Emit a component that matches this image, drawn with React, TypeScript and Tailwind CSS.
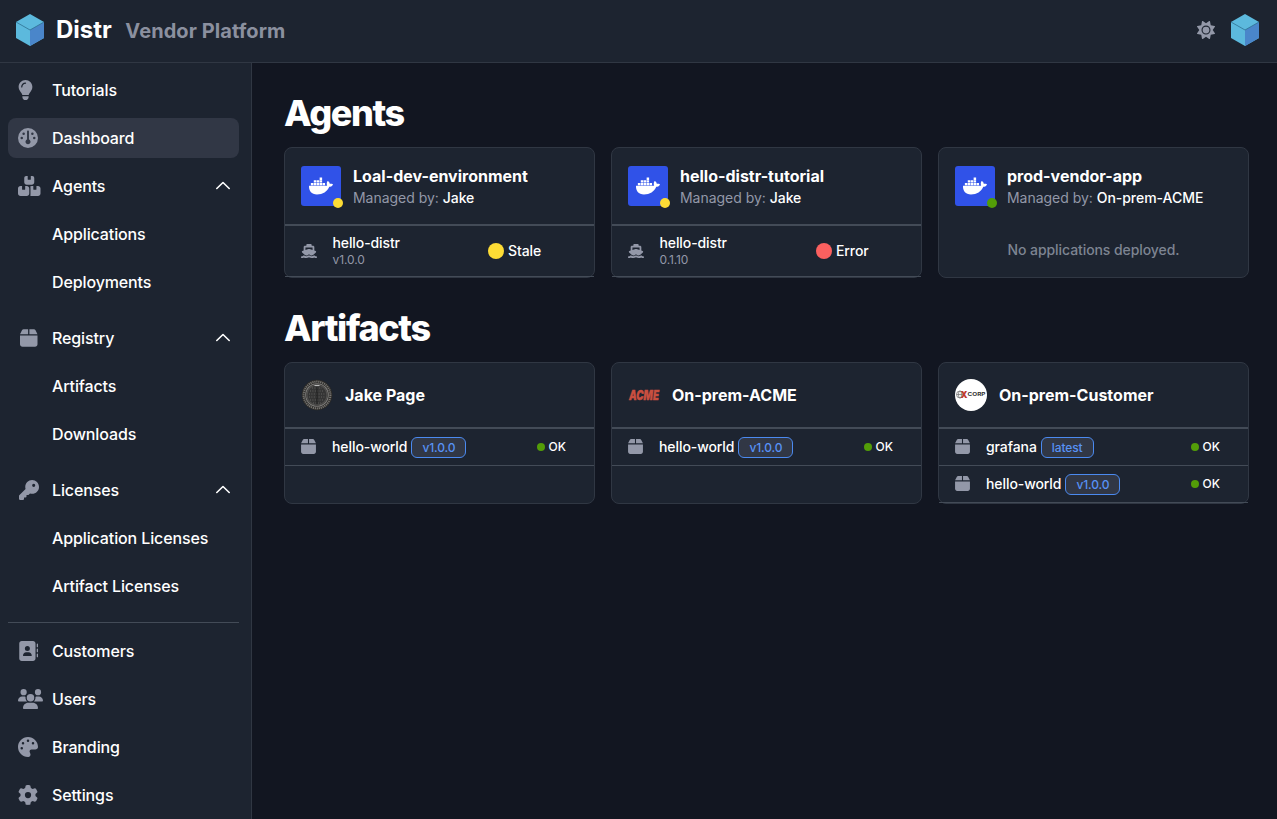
import type { ReactNode } from 'react';
import type { IconType } from 'react-icons';
import {
  FaAddressBook, FaBox, FaBoxesStacked, FaDocker, FaGauge, FaGear, FaKey,
  FaLightbulb, FaPalette, FaShip, FaSun, FaUsers,
} from 'react-icons/fa6';

function Cube() {
  return (
    <svg className="h-8 w-8 shrink-0" viewBox="0 0 32 32">
      <path d="M16 0 30 8v16l-14 8L2 24V8z" fill="#5cb9dd" />
      <path d="M16 16 30 8v16l-14 8z" fill="#4a86ca" />
      <path d="m2 8 14 8 14-8" fill="none" stroke="#2f7091" strokeWidth=".8" />
    </svg>
  );
}

function NavItem({ icon: Icon, label, active, open, iconClass = 'w-5' }: {
  icon?: IconType; label: string; active?: boolean; open?: boolean; iconClass?: string;
}) {
  return (
    <a className={`flex h-10 items-center rounded-lg pl-2.5 pr-2 ${active ? 'bg-[#313745]' : ''}`}>
      <span className="flex w-[34px] shrink-0 items-center text-[#9398a8]">
        {Icon && <Icon className={`h-5 shrink-0 ${iconClass}`} />}
      </span>
      <span className="flex-1 whitespace-nowrap">{label}</span>
      {open && (
        <svg className="h-4 w-4" viewBox="0 0 16 16" fill="none" stroke="white" strokeWidth="1.6" strokeLinecap="round" strokeLinejoin="round">
          <path d="m1.8 10.5 6.2-6 6.2 6" />
        </svg>
      )}
    </a>
  );
}

function Card({ children, className }: { children: ReactNode; className: string }) {
  return <section className={`rounded-lg border border-[#303743] bg-[#1d2430] ${className}`}>{children}</section>;
}

function AgentCard({ name, manager, dot, children }: { name: string; manager: string; dot: string; children: ReactNode }) {
  return (
    <Card className="h-[131px]">
      <div className="flex h-[76px] items-center gap-3 px-4">
        <div className="relative flex h-10 w-10 items-center justify-center rounded-[3px] bg-[#3052e8]">
          <FaDocker className="h-6 w-6 text-white" />
          <span className={`absolute -bottom-0.5 -right-0.5 h-2.5 w-2.5 rounded-full ${dot}`} />
        </div>
        <div>
          <h3 className="text-base leading-6 font-bold">{name}</h3>
          <p className="text-sm leading-5 tracking-[-0.03px] text-[#9398a8]">Managed by: <span className="font-medium text-white">{manager}</span></p>
        </div>
      </div>
      {children}
    </Card>
  );
}

function Deployment({ version, status, color, shift }: { version: string; status: string; color: string; shift: string }) {
  return (
    <div className="flex h-[53px] items-center border-t-2 border-b border-[#434b57] pl-4 text-sm font-medium tracking-[-0.1px]">
      <FaShip className="h-4 w-4 text-[#9398a8]" />
      <div className={`pl-[15.5px] ${shift}`}>
        <div className="-mt-0.5 leading-[18px]">hello-distr</div>
        <div className="text-xs leading-[15px] font-normal text-[#9398a8]">{version}</div>
      </div>
      <span className={`mr-1 h-4 w-4 rounded-full ${color}`} />
      {status}
    </div>
  );
}

function Artifact({ name, tag }: { name: string; tag: string }) {
  return (
    <div className="flex h-[37px] items-center border-b border-[#434b57] pr-7 pl-4 text-sm font-medium">
      <FaBox className="mb-0.5 h-[17px] w-[15px] text-[#9398a8]" />
      <span className="ml-4 tracking-[-0.08px]">{name}</span>
      <span className="ml-1 flex h-[21px] items-center rounded-md border border-[#4b8af0] bg-[#313745] px-2.5 pt-px text-xs tracking-[-0.12px] text-[#5792f5]">{tag}</span>
      <span className="mr-1 ml-auto h-2 w-2 rounded-full bg-[#539d08]" />
      <span className="text-xs">OK</span>
    </div>
  );
}

function ArtifactCard({ name, logo, children }: { name: string; logo: ReactNode; children: ReactNode }) {
  return (
    <Card className="h-[142px]">
      <div className="flex h-[66px] items-center gap-3 border-b-2 border-[#434b57] px-4">
        {logo}
        <h3 className="text-base font-bold">{name}</h3>
      </div>
      {children}
    </Card>
  );
}

function SealLogo() {
  return (
    <svg className="h-8 w-8" viewBox="0 0 32 32" fill="none">
      <circle cx="16" cy="16" r="15.3" fill="#2c2b29" />
      <circle cx="16" cy="16" r="13.4" stroke="#777572" strokeWidth="2" strokeDasharray="1.2 .8" />
      <circle cx="16" cy="16" r="11.3" stroke="#797876" strokeWidth="1.1" />
      <circle cx="16" cy="16" r="10" fill="#353535" stroke="#51504f" strokeWidth="1.2" />
      <path d="M9 12h14M8 15h16M8 18h16M9 21h14M12 24h8M11 9h10" stroke="#636261" strokeDasharray="1 1.4" />
      <path d="M16 8v17" stroke="#1c1c1c" />
      <path d="M13.5 6.5h5" stroke="#bbb" strokeWidth="1.2" />
    </svg>
  );
}

function AcmeLogo() {
  return (
    <svg className="h-8 w-8 overflow-visible" viewBox="0 0 32 32">
      <text x="1" y="20.5" textLength="30" lengthAdjust="spacingAndGlyphs" fill="#c94f40" stroke="#c94f40" strokeWidth=".4" className="text-[13px] font-black italic">ACME</text>
    </svg>
  );
}

function XcorpLogo() {
  return (
    <svg className="h-8 w-8" viewBox="0 0 32 32">
      <circle cx="16" cy="16" r="16" fill="white" />
      <g fill="none" stroke="#777" strokeWidth=".8">
        <circle cx="5" cy="15.5" r="3.5" />
        <ellipse cx="5" cy="15.5" rx="1.5" ry="3.5" />
        <path d="M1.5 15.5h7" />
      </g>
      <text x="5.5" y="19" textLength="7" lengthAdjust="spacingAndGlyphs" fill="#c23b2e" className="text-[9.5px] font-black">X</text>
      <text x="12.5" y="17" textLength="18" lengthAdjust="spacingAndGlyphs" fill="#333" className="text-[5px] font-bold">CORP</text>
    </svg>
  );
}

export default function App() {
  return (
    <div className="flex h-[819px] w-full flex-col overflow-hidden bg-[#121621] font-['Inter',sans-serif] text-white">
      <header className="flex h-[63px] shrink-0 items-center border-b border-[#303743] bg-[#1d2430] px-4 pb-[3px]">
        <div className="-ml-0.5"><Cube /></div>
        <span className="ml-2.5 text-2xl leading-8 font-bold">Distr</span>
        <span className="mt-[3px] ml-[13.5px] text-xl leading-7 font-bold tracking-[0.08px] text-[#8b909f]">Vendor Platform</span>
        <FaSun className="mr-3.5 ml-auto h-[18px] w-[18px] text-[#9398a8]" />
        <Cube />
      </header>
      <div className="flex min-h-0 flex-1">
        <aside className="w-[252px] shrink-0 border-r border-[#303743] bg-[#1d2430] pt-[7px] pr-3 pl-2 text-base font-medium tracking-[-0.12px]">
          <nav className="flex flex-col gap-2">
            <NavItem icon={FaLightbulb} label="Tutorials" iconClass="w-[15px]" />
            <NavItem icon={FaGauge} label="Dashboard" active />
            <div className="flex flex-col gap-2 pb-2">
              <NavItem icon={FaBoxesStacked} label="Agents" open iconClass="w-[22.5px]" />
              <NavItem label="Applications" />
              <NavItem label="Deployments" />
            </div>
            <div className="flex flex-col gap-2 pb-2">
              <NavItem icon={FaBox} label="Registry" open iconClass="ml-0.5 w-[17.5px]" />
              <NavItem label="Artifacts" />
              <NavItem label="Downloads" />
            </div>
            <div className="flex flex-col gap-2 pb-2">
              <NavItem icon={FaKey} label="Licenses" open iconClass="ml-px w-5" />
              <NavItem label="Application Licenses" />
              <NavItem label="Artifact Licenses" />
            </div>
            <div className="flex flex-col gap-2 border-t border-[#434b57] pt-2">
              <NavItem icon={FaAddressBook} label="Customers" />
              <NavItem icon={FaUsers} label="Users" iconClass="w-[25px]" />
              <NavItem icon={FaPalette} label="Branding" />
              <NavItem icon={FaGear} label="Settings" />
            </div>
          </nav>
        </aside>
        <main className="flex-1 px-8 pt-[30px] pr-7">
          <h1 className="h-[54px] text-4xl leading-10 font-extrabold tracking-[-1.4px]">Agents</h1>
          <div className="grid grid-cols-3 gap-4">
            <AgentCard name="Loal-dev-environment" manager="Jake" dot="bg-[#fddc35]">
              <Deployment version="v1.0.0" status="Stale" color="bg-[#fddc35]" shift="w-[171px]" />
            </AgentCard>
            <AgentCard name="hello-distr-tutorial" manager="Jake" dot="bg-[#fddc35]">
              <Deployment version="0.1.10" status="Error" color="bg-[#fb605f]" shift="w-[172px]" />
            </AgentCard>
            <AgentCard name="prod-vendor-app" manager="On-prem-ACME" dot="bg-[#539d08]">
              <p className="pt-4 text-center text-sm leading-5 font-medium tracking-[-0.08px] text-[#7d8492]">No applications deployed.</p>
            </AgentCard>
          </div>
          <h1 className="mt-[30px] h-[54px] text-4xl leading-10 font-extrabold tracking-[-1.4px]">Artifacts</h1>
          <div className="grid grid-cols-3 gap-4">
            <ArtifactCard name="Jake Page" logo={<SealLogo />}>
              <Artifact name="hello-world" tag="v1.0.0" />
            </ArtifactCard>
            <ArtifactCard name="On-prem-ACME" logo={<AcmeLogo />}>
              <Artifact name="hello-world" tag="v1.0.0" />
            </ArtifactCard>
            <ArtifactCard name="On-prem-Customer" logo={<XcorpLogo />}>
              <Artifact name="grafana" tag="latest" />
              <Artifact name="hello-world" tag="v1.0.0" />
            </ArtifactCard>
          </div>
        </main>
      </div>
    </div>
  );
}
